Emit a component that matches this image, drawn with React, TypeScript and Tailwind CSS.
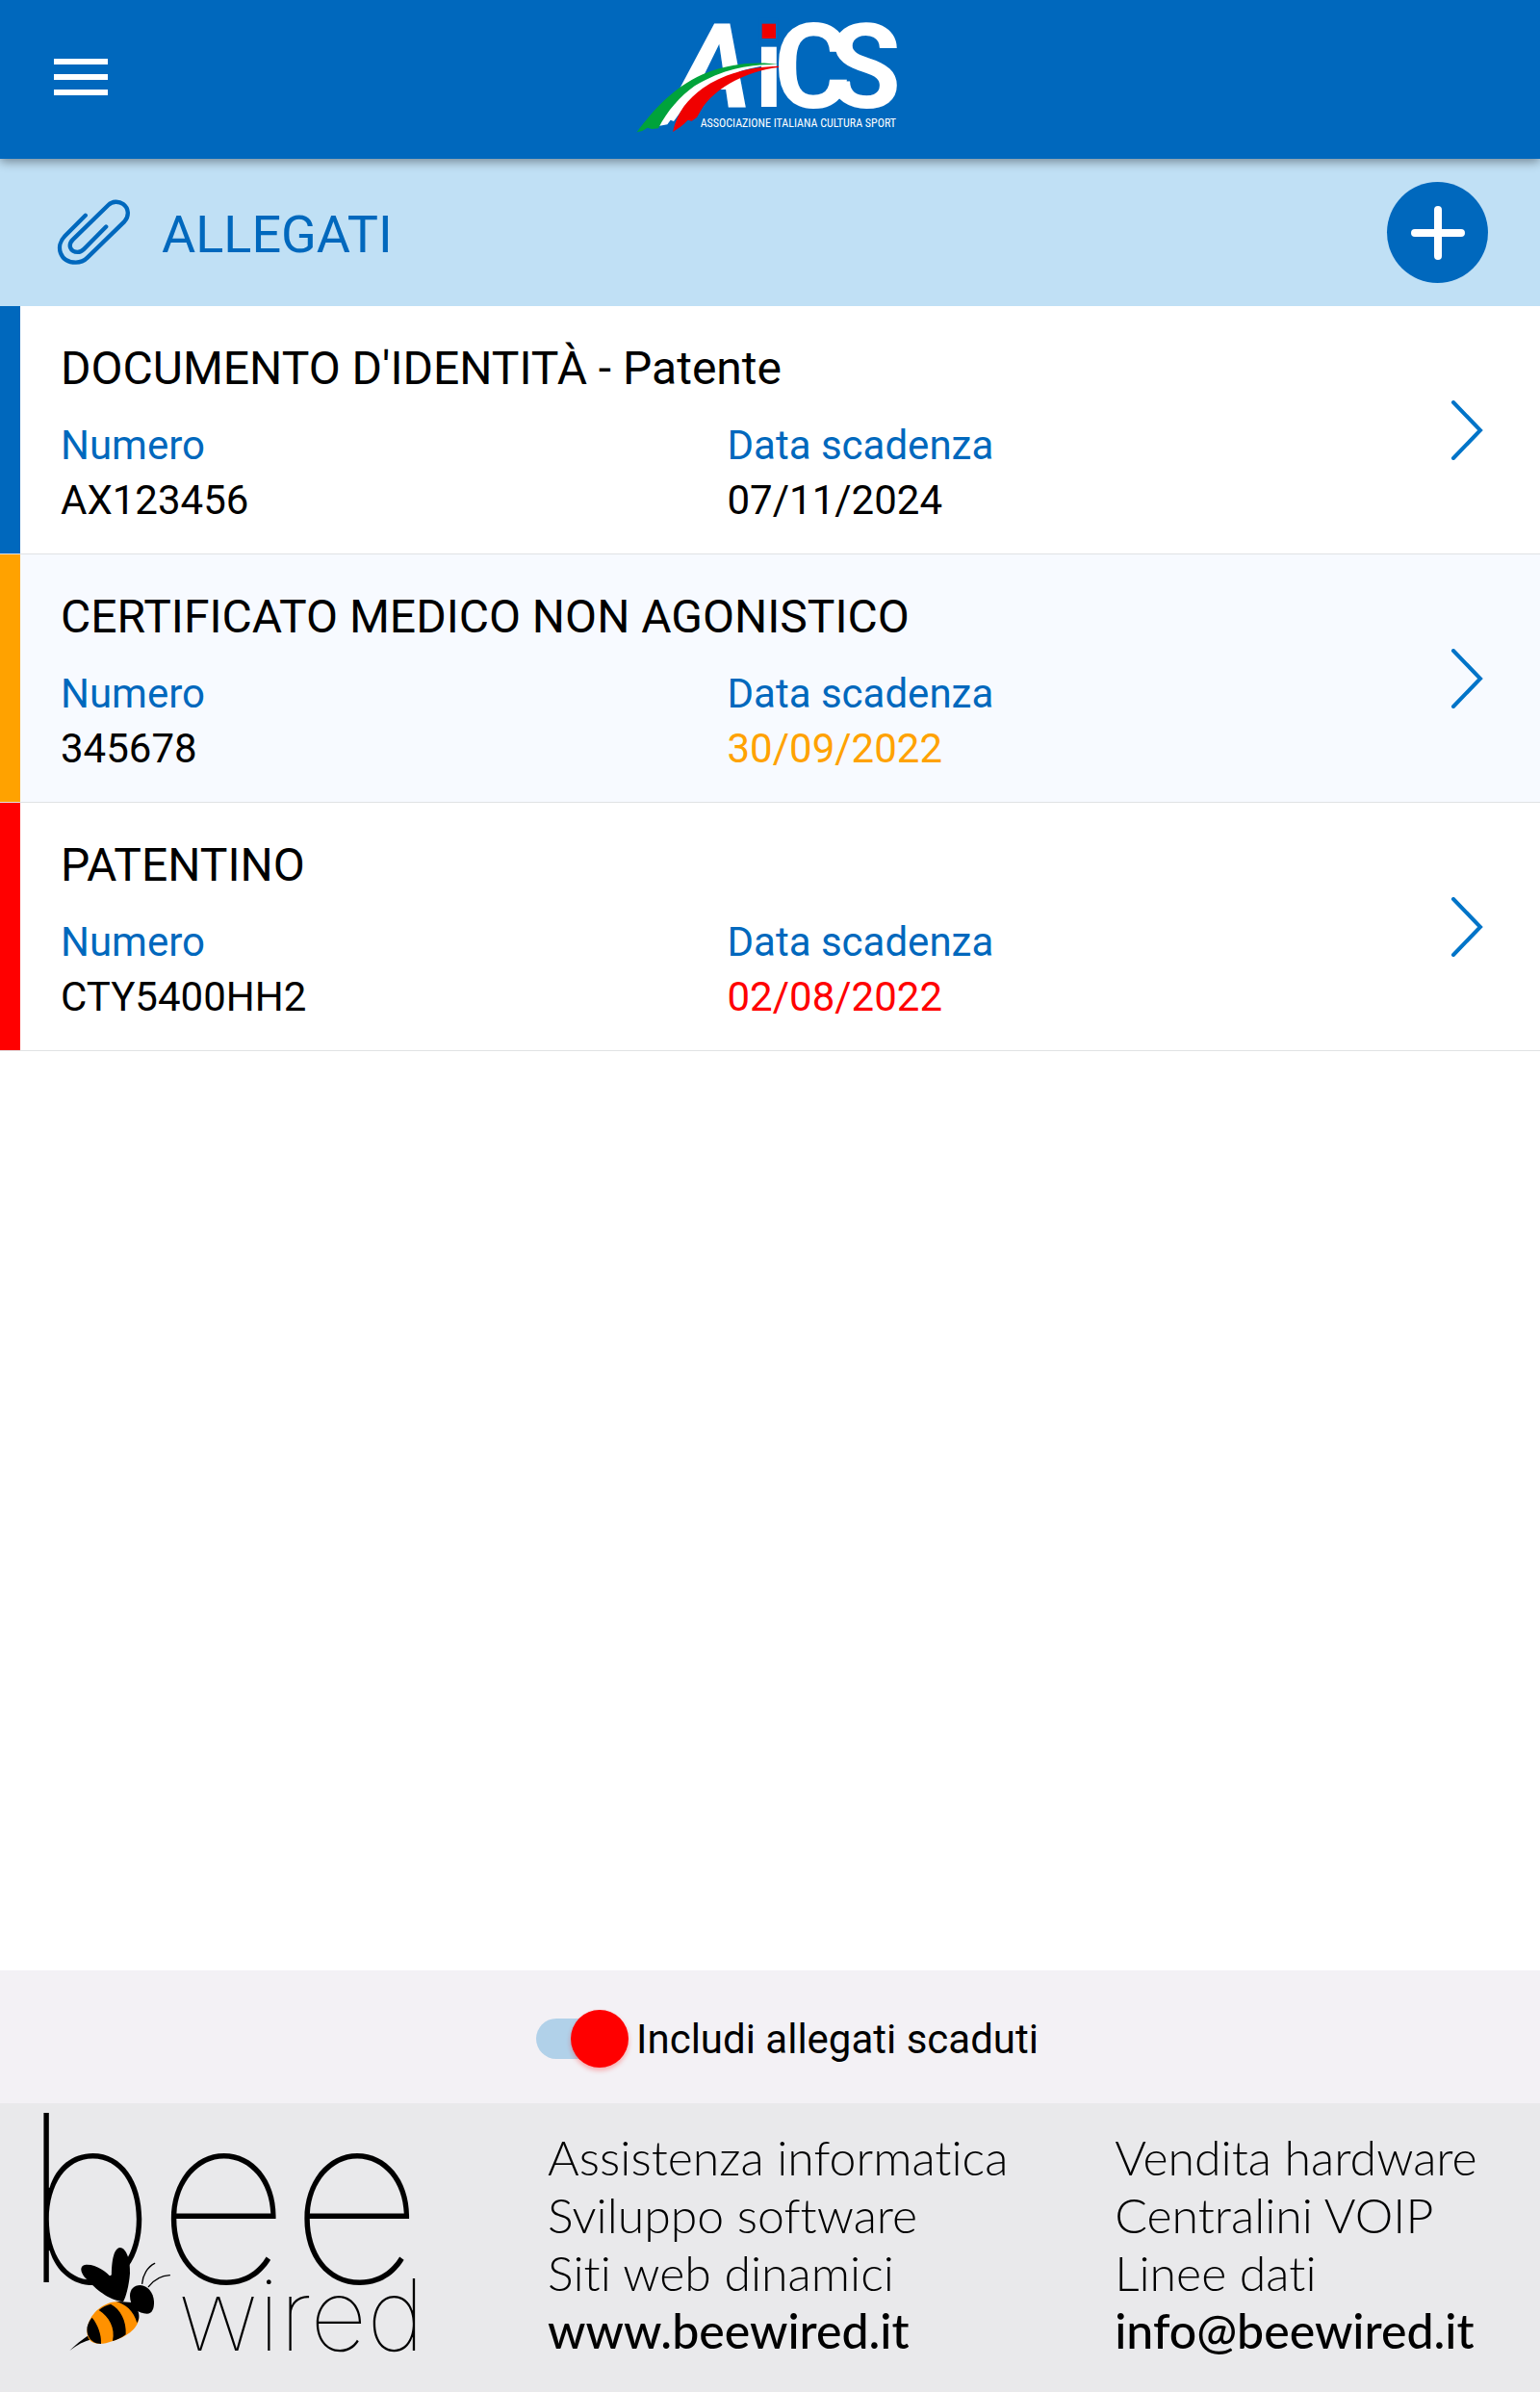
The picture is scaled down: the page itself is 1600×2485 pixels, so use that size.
import clsx from "clsx";
import React, { useState } from "react";

type Status = "valid" | "expiring" | "expired";

interface Attachment {
  id: string;
  title: string;
  number: string;
  expiry: string;
  status: Status;
}

const attachments: Attachment[] = [
  {
    id: "identity",
    title: "DOCUMENTO D'IDENTITÀ - Patente",
    number: "AX123456",
    expiry: "07/11/2024",
    status: "valid",
  },
  {
    id: "medical",
    title: "CERTIFICATO MEDICO NON AGONISTICO",
    number: "345678",
    expiry: "30/09/2022",
    status: "expiring",
  },
  {
    id: "licence",
    title: "PATENTINO",
    number: "CTY5400HH2",
    expiry: "02/08/2022",
    status: "expired",
  },
];

const stripeColor: Record<Status, string> = {
  valid: "bg-[#0068bd]",
  expiring: "bg-[#ffa200]",
  expired: "bg-[#ff0000]",
};

const dateColor: Record<Status, string> = {
  valid: "text-black",
  expiring: "text-[#ffa200]",
  expired: "text-[#ff0000]",
};

const AicsLogo = () => (
  <svg
    viewBox="60 60 840 375"
    className="h-[125px] w-[280px] overflow-visible"
    role="img"
    aria-label="AiCS"
  >
    <g fill="#fff" fontFamily="Roboto, sans-serif" fontWeight="700" fontSize="366">
      <text x="186" y="332" fontStyle="italic">A</text>
      <text x="429" y="332" fontWeight="600">i</text>
      <text x="492" y="335">C</text>
      <text x="663" y="335">S</text>
    </g>
    <rect x="446" y="56" width="60" height="90" fill="#0068bd" />
    <rect x="455" y="74" width="43" height="46" fill="#f00000" />
    <path
      d="M507 202C400 205 300 245 215 330L180 378L170 374L160 388L136 392L120 380L190 290C280 215 400 190 507 202Z"
      fill="#fff"
    />
    <path
      d="M507 201C440 190 350 198 270 232C175 275 115 345 65 412L82 408L98 398L112 402L132 400C160 345 200 300 245 268C330 215 420 198 507 201Z"
      fill="#00a33b"
    />
    <path
      d="M507 206C420 208 340 228 270 275C225 308 192 345 177 411L200 396L212 386L224 374L236 377L252 366L264 345C300 280 400 222 507 210Z"
      fill="#f00000"
    />
    <text x="263" y="397" fill="#fff" fontFamily="'Roboto Condensed', Roboto, sans-serif" fontSize="36">
      ASSOCIAZIONE ITALIANA CULTURA SPORT
    </text>
  </svg>
);

const BeeWiredLogo = () => (
  <svg
    viewBox="0 0 480 300"
    className="h-[300px] w-[480px] overflow-visible"
    role="img"
    aria-label="bee wired"
  >
    <g fill="#000" fontFamily="Inter, sans-serif" fontWeight="100">
      <text x="22" y="186" fontSize="242">bee</text>
      <text x="185" y="257" fontSize="103">wired</text>
    </g>
    <g transform="translate(0 -5) scale(.33333)">
      <path d="M217 786C235 768 255 752 276 738L288 750C262 756 240 768 217 786Z" />
      <path
        d="M272 735C268 690 300 650 345 636C385 626 430 650 433 685C430 720 390 745 350 757C310 772 275 765 272 735Z"
        fill="#ff9100"
      />
      <path d="M287 683C305 705 316 735 315 765C280 765 268 735 272 712C275 700 280 690 287 683Z" />
      <path d="M308 660C320 650 332 644 345 641C375 655 395 695 392 736C378 747 364 753 351 756C360 715 340 680 308 660Z" />
      <path d="M360 632C390 640 418 662 427 700C436 685 434 672 430 662L442 668L412 636Z" />
      <path d="M405 615C405 595 418 582 437 582C460 583 478 605 480 632C481 655 474 671 458 671C430 670 405 650 405 615Z" />
      <path d="M375 632C330 625 290 585 268 562C248 540 248 520 268 518C300 516 330 540 348 558C347 520 352 466 374 465C396 466 407 510 405 545C402 585 392 620 384 634Z" />
      <g fill="none" stroke="#000" strokeWidth="4" strokeLinecap="round">
        <path d="M443 577C445 550 460 525 482 514" />
        <path d="M463 587C480 565 505 552 529 551" />
      </g>
    </g>
  </svg>
);

const PaperclipIcon = () => (
  <svg
    viewBox="178 622 230 206"
    className="h-[69px] w-[77px] text-[#0068bd]"
    fill="none"
    stroke="currentColor"
    strokeWidth="13"
    strokeLinecap="round"
    aria-hidden="true"
  >
    <path d="M267 672L203 736C172 768 188 818 237 818C252 818 263 813 273 803L388 691C403 675 402 650 384 637C370 627 350 628 338 640L228 747C211 764 220 786 243 786C250 786 256 783 262 777L331 707" />
  </svg>
);

const AttachmentRow: React.FC<{ item: Attachment }> = ({ item }) => (
  <li className="flex border-b border-[#e0e2e4] even:bg-[#f7faff]">
    <div className={clsx("w-[21px] shrink-0", stripeColor[item.status])} />
    <div className="flex-1 pt-[37px] pb-[27px] pl-[42px]">
      <h2 className="text-[48px] leading-[56px]">{item.title}</h2>
      <dl className="mt-[23px] grid grid-cols-2 text-[42px] leading-[57px]">
        <div>
          <dt className="text-[#0068bd]">Numero</dt>
          <dd>{item.number}</dd>
        </div>
        <div>
          <dt className="text-[#0068bd]">Data scadenza</dt>
          <dd className={dateColor[item.status]}>{item.expiry}</dd>
        </div>
      </dl>
    </div>
    <button
      className="flex w-[152px] shrink-0 items-center justify-center text-[#0074c8]"
      aria-label={`Apri ${item.title}`}
    >
      <svg viewBox="0 0 34 62" className="h-[62px] w-[34px]" fill="none" stroke="currentColor" strokeWidth="4">
        <path d="M3 2L31 31L3 60" strokeLinecap="round" />
      </svg>
    </button>
  </li>
);

const App: React.FC = () => {
  const [includeExpired, setIncludeExpired] = useState<boolean>(true);

  const visible = attachments.filter(
    (item) => includeExpired || item.status !== "expired"
  );

  return (
    <div className="flex min-h-screen flex-col bg-white font-[Roboto,sans-serif] text-black">
      <header className="relative z-10 grid h-[165px] grid-cols-[1fr_auto_1fr] items-center bg-[#0068bd] px-14 shadow-[0_3px_10px_rgba(0,0,0,0.4)]">
        <button className="w-14 text-white" aria-label="Menu">
          <svg viewBox="0 0 56 43" className="h-[43px] w-14" fill="currentColor">
            <path d="M0 0h56v6H0zM0 16h56v6H0zM0 32h56v6H0z" />
          </svg>
        </button>
        <AicsLogo />
      </header>

      <div className="flex h-[153px] items-center justify-between bg-[#c0e0f5] pr-[54px] pl-[59px]">
        <div className="flex items-center gap-8">
          <PaperclipIcon />
          <h1 className="pt-1 text-[54px] leading-[64px] text-[#0068bd]">ALLEGATI</h1>
        </div>
        <button
          className="flex size-[105px] items-center justify-center rounded-full bg-[#0068bd] text-white"
          aria-label="Aggiungi allegato"
        >
          <svg viewBox="0 0 56 56" className="size-14" stroke="currentColor" strokeWidth="8" strokeLinecap="round">
            <path d="M28 4v48M4 28h48" />
          </svg>
        </button>
      </div>

      <main className="flex-1">
        <ul>
          {visible.map((item) => (
            <AttachmentRow key={item.id} item={item} />
          ))}
        </ul>
      </main>

      <div className="flex h-[138px] items-center justify-center bg-[#f3f1f5] pt-1 pl-9">
        <label className="flex cursor-pointer items-center gap-2 text-[42px] leading-[57px]">
          <span className="relative flex h-[60px] w-24 items-center">
            <input
              type="checkbox"
              role="switch"
              className="peer h-[42px] w-[84px] cursor-pointer appearance-none rounded-full bg-[#b1d1e9]"
              checked={includeExpired}
              onChange={(e) => setIncludeExpired(e.target.checked)}
            />
            <span className="pointer-events-none absolute left-0 size-[60px] rounded-full bg-gray-400 peer-checked:left-9 peer-checked:bg-[#ff0000] peer-checked:shadow-[0_3px_5px_rgba(255,0,0,0.3)]" />
          </span>
          Includi allegati scaduti
        </label>
      </div>

      <footer className="flex h-[300px] bg-[#e9e9eb] font-[Lato,sans-serif] text-[50px] leading-[60px] font-light [font-variant-ligatures:none]">
        <BeeWiredLogo />
        <div className="grid flex-1 grid-cols-[4fr_3fr] pt-[26px] pl-[89px]">
          <div>
            <p>Assistenza informatica</p>
            <p>Sviluppo software</p>
            <p>Siti web dinamici</p>
            <a href="#www" className="font-medium">www.beewired.it</a>
          </div>
          <div>
            <p>Vendita hardware</p>
            <p>Centralini VOIP</p>
            <p>Linee dati</p>
            <a href="#info" className="font-medium">info@beewired.it</a>
          </div>
        </div>
      </footer>
    </div>
  );
};

export default App;
